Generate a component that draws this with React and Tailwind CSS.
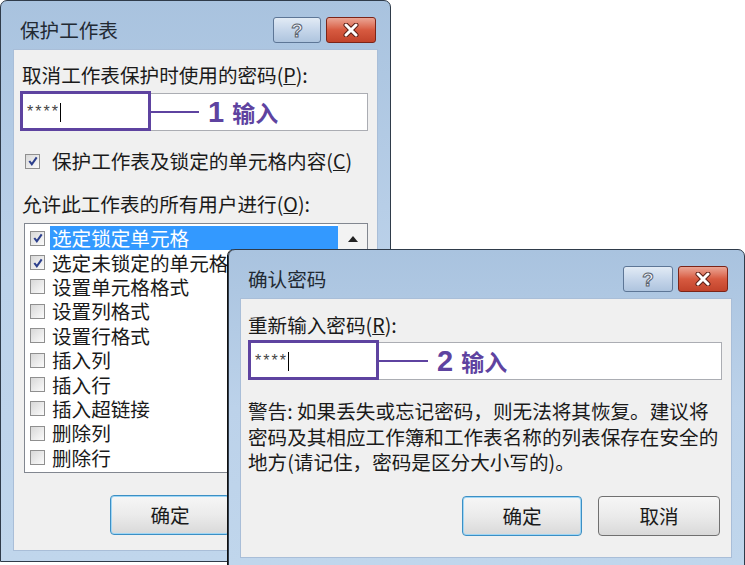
import React from "react";

const font = "font-['Noto_Sans_CJK_SC','Noto_Sans',sans-serif]";

const CheckBox = ({ checked }) => (
  <span className="flex h-[15px] w-[15px] shrink-0 items-center justify-center border border-[#8f8f8f] bg-gradient-to-br from-[#d8d8d8] to-[#fbfbfb]">
    {checked && (
      <svg viewBox="0 0 13 13" className="h-[12px] w-[12px]">
        <path d="M2.5 6.5 L5.2 10 L10.5 2.5" fill="none" stroke="#2c3f8c" strokeWidth="2.2" />
      </svg>
    )}
  </span>
);

const HelpButton = ({ w }) => (
  <div
    className={`flex h-[26px] items-center justify-center rounded-[3px] border border-[#5d7696] bg-gradient-to-b from-[#e2ebf5] via-[#c6d6ea] to-[#aec4de] ${w}`}
  >
    <span className="font-['Liberation_Sans',sans-serif] text-[19px] leading-none font-bold text-[#f5f7fa] [-webkit-text-stroke:1px_#59636f]">
      ?
    </span>
  </div>
);

const CloseButton = ({ w }) => (
  <div
    className={`flex h-[26px] items-center justify-center rounded-[3px] border border-[#7c2417] bg-gradient-to-b from-[#eaa595] via-[#d75a40] to-[#c2432b] ${w}`}
  >
    <svg viewBox="0 0 20 14" className="h-[14px] w-[20px]">
      <path d="M5 2 L15 12 M15 2 L5 12" stroke="#5a1f16" strokeWidth="5" strokeLinecap="round" />
      <path d="M5 2 L15 12 M15 2 L5 12" stroke="#ffffff" strokeWidth="3" strokeLinecap="round" />
    </svg>
  </div>
);

const Window = ({ title, className, helpW, closeW, pr, children }) => (
  <div
    className={`absolute flex flex-col rounded-t-[7px] border border-[#2f3b4a] bg-gradient-to-b from-[#a9c3df] via-[#bcd2ea] to-[#c0d6ec] ${className}`}
  >
    <div className={`flex h-[48px] shrink-0 items-start pt-[16px] pl-[19px] ${pr}`}>
      <span className="flex h-[26px] items-center text-[19.6px] leading-[24px] text-[#222a33]">{title}</span>
      <div className="ml-auto flex gap-[5px]">
        <HelpButton w={helpW} />
        <CloseButton w={closeW} />
      </div>
    </div>
    {children}
  </div>
);

const PasswordBox = ({ width, num, lineW }) => (
  <div className={`relative flex h-[38px] items-center border border-[#abadb3] bg-white ${width}`}>
    <span className="pl-[6px] font-['Liberation_Sans',sans-serif] text-[16px] leading-none tracking-[2px] text-[#444]">
      ****
    </span>
    <span className="h-[19px] w-[1.5px] bg-black" />
    <div className="absolute -top-[3px] -left-[1px] h-[40px] w-[131px] border-[3px] border-[#5e43a0]" />
    <div className="absolute top-0 left-[130px] flex h-[36px] items-center text-[#5e43a0]">
      <span className={`h-[2px] bg-[#5e43a0] ${lineW}`} />
      <span className="ml-[9px] font-['Liberation_Sans',sans-serif] text-[29px] leading-none font-bold">{num}</span>
      <span className="ml-[8px] text-[23px] leading-none font-bold">输入</span>
    </div>
  </div>
);

const DialogButton = ({ label, focused, w }) => (
  <div
    className={`flex h-[40px] items-center justify-center rounded-[4px] border bg-gradient-to-b from-[#f6f6f6] via-[#ebebeb] to-[#d9d9d9] text-[19.6px] leading-[24px] text-[#1a1a1a] ${w} ${
      focused ? "border-[#3c8fc4] shadow-[inset_0_0_0_1px_#9fd6f5]" : "border-[#707070]"
    }`}
  >
    {label}
  </div>
);

const items = [
  ["选定锁定单元格", true],
  ["选定未锁定的单元格", true],
  ["设置单元格格式", false],
  ["设置列格式", false],
  ["设置行格式", false],
  ["插入列", false],
  ["插入行", false],
  ["插入超链接", false],
  ["删除列", false],
  ["删除行", false],
];

export default function App() {
  return (
    <div className={`relative h-[565px] w-[745px] overflow-hidden bg-white text-[#1a1a1a] ${font}`}>
      <Window
        title="保护工作表"
        className="top-0 left-0 h-[562px] w-[391px]"
        helpW="w-[48px]"
        closeW="w-[50px]"
        pr="pr-[14px]"
      >
        <div className="mx-[12px] mb-[10px] flex flex-1 flex-col border border-[#a9bed8] bg-[#f0f0f0] pt-[13px]">
          <div className="pl-[8px] text-[19.6px] leading-[24px]">
            取消工作表保护时使用的密码(<u>P</u>):
          </div>
          <div className="mt-[6px] pl-[6px]">
            <PasswordBox width="w-[348px]" num="1" lineW="w-[48px]" />
          </div>
          <div className="mt-[18px] flex h-[24px] items-center pl-[11px]">
            <CheckBox checked />
            <span className="ml-[12px] text-[19.6px] leading-[24px]">
              保护工作表及锁定的单元格内容(<u>C</u>)
            </span>
          </div>
          <div className="mt-[19px] pl-[8px] text-[19.6px] leading-[24px]">
            允许此工作表的所有用户进行(<u>O</u>):
          </div>
          <div className="mt-[7px] ml-[10px] flex h-[250px] w-[344px] border border-[#828790] bg-white">
            <div className="flex flex-1 flex-col pt-[2px]">
              {items.map(([label, checked], i) => (
                <div key={label} className="flex h-[24.4px] items-center pl-[5px]">
                  <CheckBox checked={checked} />
                  <span
                    className={`ml-[5px] flex h-full flex-1 items-center pl-[2px] text-[19.6px] leading-[22px] ${
                      i === 0 ? "bg-[#3399ff] text-white" : ""
                    }`}
                  >
                    {label}
                  </span>
                </div>
              ))}
            </div>
            <div className="flex w-[29px] flex-col bg-[#f3f3f3]">
              <div className="flex h-[30px] items-center justify-center">
                <svg viewBox="0 0 10 6" className="h-[6px] w-[10px]">
                  <path d="M5 0 L10 6 L0 6 Z" fill="#222" />
                </svg>
              </div>
            </div>
          </div>
          <div className="mt-[22px] ml-[96px]">
            <DialogButton label="确定" focused w="w-[120px]" />
          </div>
        </div>
      </Window>

      <Window
        title="确认密码"
        className="top-[249px] left-[228px] h-[317px] w-[517px] shadow-[-1px_0_0_#111]"
        helpW="w-[50px]"
        closeW="w-[50px]"
        pr="pr-[16px]"
      >
        <div className="mr-[12px] mb-[7px] ml-[11px] flex flex-1 flex-col border border-[#a9bed8] bg-[#f0f0f0] pt-[14px]">
          <div className="pl-[7px] text-[19.6px] leading-[24px]">
            重新输入密码(<u>R</u>):
          </div>
          <div className="mt-[5px] pl-[7px]">
            <PasswordBox width="w-[474px]" num="2" lineW="w-[49px]" />
          </div>
          <p className="mt-[18px] pl-[7px] text-[19.6px] leading-[25.5px]">
            警告: 如果丢失或忘记密码，则无法将其恢复。建议将
            <br />
            密码及其相应工作簿和工作表名称的列表保存在安全的
            <br />
            地方(请记住，密码是区分大小写的)。
          </p>
          <div className="mt-[21px] flex justify-end gap-[16px] pr-[11px]">
            <DialogButton label="确定" focused w="w-[120px]" />
            <DialogButton label="取消" w="w-[122px]" />
          </div>
        </div>
      </Window>
    </div>
  );
}
